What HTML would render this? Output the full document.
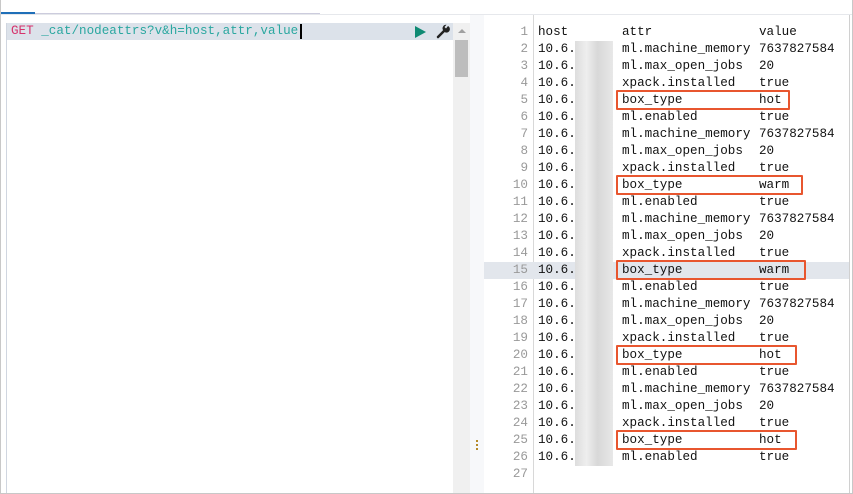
<!DOCTYPE html>
<html><head><style>
*{margin:0;padding:0;box-sizing:border-box}
body{width:853px;height:494px;background:#fff;position:relative;overflow:hidden;font-family:"Liberation Mono",monospace}
.a{position:absolute}
.row{position:absolute;left:484px;width:365px;height:17px;font-size:12.6px;line-height:17px;white-space:pre;color:#111}
.num{position:absolute;left:0;width:44px;text-align:right;color:#999}
.t{position:absolute;left:54px}
.blur{position:absolute;left:91px;width:38px;height:17px;background:linear-gradient(90deg,#ddd,#eee 30%,#d8d8d8 60%,#e8e8e8)}
.box{position:absolute;border:2px solid #e8562f;border-radius:1px}
</style></head><body>
<div class="a" style="left:0;top:0;width:853px;height:494px;border:1px solid #c8c8c8;border-top:none"></div>
<div class="a" style="left:1px;top:12px;width:34px;height:2px;background:#1f6fb8"></div>
<div class="a" style="left:35px;top:13px;width:285px;height:1px;background:#ccd"></div>
<div class="a" style="left:1px;top:14px;width:851px;height:1px;background:#e6e8ec"></div>
<div class="a" style="left:6px;top:23px;width:1px;height:470px;background:#d0d6e0"></div>
<div class="a" style="left:7px;top:23px;width:446px;height:17px;background:#dce2ea"></div>
<div class="a" style="left:11px;top:23px;font-size:12.6px;line-height:17px;white-space:pre;color:#2aa7a0"><span style="color:#d6336c">GET</span> _cat/nodeattrs?v&amp;h=host,attr,value</div>
<div class="a" style="left:300px;top:24px;width:2px;height:15px;background:#000"></div>
<svg class="a" style="left:414px;top:25px" width="14" height="14"><path d="M1 1L12 7L1 13Z" fill="#0f8a73"/></svg>
<svg class="a" style="left:436px;top:24px" width="15" height="15"><path d="M2 13L8 7" stroke="#222" stroke-width="2.5" stroke-linecap="round"/><path d="M7 6a3.5 3.5 0 1 0 5-4l-2 2.5-1.5-1.5 2-2.2a3.5 3.5 0 0 0-3.5 5.2z" fill="#222"/></svg>
<div class="a" style="left:453px;top:23px;width:17px;height:470px;background:#f0f0f0"></div>
<svg class="a" style="left:457px;top:28px" width="10" height="6"><path d="M1 5L5 1L9 5Z" fill="#a0a0a0"/></svg>
<div class="a" style="left:455px;top:40px;width:13px;height:37px;background:#bdbdbd"></div>
<div class="a" style="left:470px;top:15px;width:14px;height:478px;background:#f7f8fa"></div>
<div class="a" style="left:476px;top:440px;width:2px;height:2px;background:#b58a2a"></div>
<div class="a" style="left:476px;top:444px;width:2px;height:2px;background:#b58a2a"></div>
<div class="a" style="left:476px;top:448px;width:2px;height:2px;background:#b58a2a"></div>
<div class="a" style="left:533px;top:15px;width:1px;height:478px;background:#d8d8d8"></div>
<div class="a" style="left:849px;top:15px;width:1px;height:478px;background:#d0d0d0"></div>
<div class="a" style="left:484px;top:262px;width:365px;height:17px;background:#e2e6ec"></div>
<div id="r"></div>
<script>
var d=[["host","attr","value"]],c=["ml.machine_memory","7637827584","ml.max_open_jobs","20","xpack.installed","true","box_type","hot","ml.enabled","true"];
var bt=["hot","warm","warm","hot","hot"];
for(var i=0;i<25;i++){var k=i%5;d.push(["10.6.",c[k*2],k==3?bt[Math.floor(i/5)]:c[k*2+1]]);}
var h="";
for(var i=0;i<27;i++){var y=24+17*i;h+='<div class="row" style="top:'+y+'px"><span class="num">'+(i+1)+'</span>';
if(d[i]){h+='<span class="t">'+d[i][0]+'</span>';if(i>0)h+='<span class="blur"></span>';h+='<span class="t" style="left:138px">'+d[i][1]+'</span><span class="t" style="left:275px">'+d[i][2]+'</span>';}
h+='</div>';}
var bx=[[5,790],[10,803],[15,806],[20,797],[25,797]];
bx.forEach(function(b){var y=24+17*(b[0]-1)-2;h+='<div class="box" style="left:616px;top:'+y+'px;width:'+(b[1]-616)+'px;height:20px"></div>';});
document.getElementById("r").innerHTML=h;
</script>
</body></html>
